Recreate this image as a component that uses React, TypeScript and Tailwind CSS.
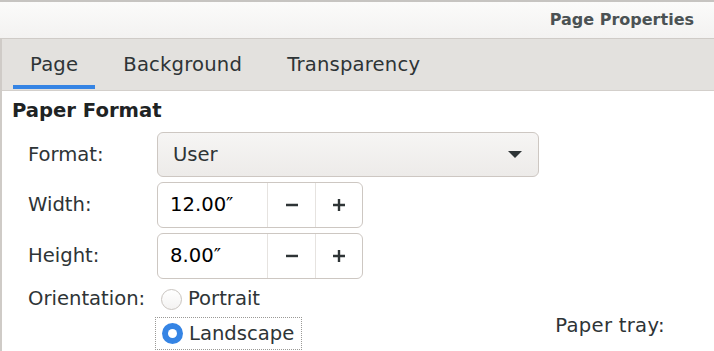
import React from 'react';

const font = { fontFamily: '"DejaVu Sans", "Liberation Sans", sans-serif' };

function SpinBox({ value }: { value: string }) {
  return (
    <div className="flex h-[46px] w-[206px] rounded-[6px] border border-[#cdc7c2] bg-white overflow-hidden">
      <div className="w-[109px] flex items-center pl-[12px] text-black">{value}</div>
      <button className="w-[48px] flex items-center justify-center border-l border-[#e6e3e0]">
        <svg width="14" height="14" viewBox="0 0 14 14">
          <path d="M1 7h12" stroke="#2e3436" strokeWidth="2.4" />
        </svg>
      </button>
      <button className="flex-1 flex items-center justify-center border-l border-[#e6e3e0]">
        <svg width="14" height="14" viewBox="0 0 14 14">
          <path d="M1 7h12M7 1v12" stroke="#2e3436" strokeWidth="2.4" />
        </svg>
      </button>
    </div>
  );
}

export default function App() {
  return (
    <div className="w-[714px] h-[351px] overflow-hidden bg-white text-[#2e3436]" style={font}>
      {/* Header */}
      <div className="h-[38px] border-t-2 border-[#c6c4c1] bg-gradient-to-b from-[#fbfbfa] to-[#f3f2f1] flex items-center justify-end pr-[20px]">
        <span className="text-[16px] font-bold text-[#4b5254]">Page Properties</span>
      </div>

      {/* Notebook */}
      <div className="border-l-2 border-t border-[#cfcbc7] h-full">
        {/* Tabs */}
        <div className="h-[52px] bg-[#e3e1de] border-b border-[#d3cfcb] flex items-stretch pl-[11px] gap-[11px] text-[19.6px] tracking-[0.2px]">
          <div className="relative flex items-center px-[17px] text-[#2e3436]">
            Page
            <div className="absolute left-0 right-0 bottom-[1px] h-[4px] bg-[#3584e4]" />
          </div>
          <div className="flex items-center px-[17px] text-[#2e3436]">Background</div>
          <div className="flex items-center px-[17px] text-[#2e3436]">Transparency</div>
        </div>

        {/* Content */}
        <div className="pl-[10px] pt-[8px] text-[19.6px]">
          <div className="h-[24px] flex items-center font-bold text-[#1e2324]">Paper Format</div>

          <div className="mt-[9px] pl-[16px] flex flex-col gap-[5px]">
            <div className="flex items-center">
              <div className="w-[129px]">Format:</div>
              <div className="w-[382px] h-[45px] rounded-[6px] border border-[#cdc7c2] bg-gradient-to-b from-[#f6f5f4] to-[#edebe9] flex items-center justify-between pl-[15px] pr-[15px]">
                <span>User</span>
                <svg width="16" height="8" viewBox="0 0 16 8">
                  <path d="M1 0h14L8 7z" fill="#2e3436" />
                </svg>
              </div>
            </div>
            <div className="flex items-center">
              <div className="w-[129px]">Width:</div>
              <SpinBox value="12.00″" />
            </div>
            <div className="flex items-center">
              <div className="w-[129px]">Height:</div>
              <SpinBox value="8.00″" />
            </div>

            <div className="flex items-center mt-[5px] h-[20px]">
              <div className="w-[133px]">Orientation:</div>
              <div className="flex items-center gap-[6px]">
                <span className="shrink-0 w-[21px] h-[21px] rounded-full border border-[#c9c4bf] bg-gradient-to-b from-white to-[#f4f3f2]" />
                <span>Portrait</span>
              </div>
            </div>

            <div className="flex items-center mt-[3px]">
              <div className="w-[127px] shrink-0" />
              <div className="h-[33px] flex items-center gap-[6px] pl-[6px] pr-[7px] border border-dotted border-[#9a9996]">
                <span className="shrink-0 w-[21px] h-[21px] rounded-full bg-[#3584e4] flex items-center justify-center">
                  <span className="w-[9px] h-[9px] rounded-full bg-white" />
                </span>
                <span>Landscape</span>
              </div>
              <div className="ml-[253px] -mt-[16px] tracking-[0.3px]">Paper tray:</div>
            </div>
          </div>
        </div>
      </div>
    </div>
  );
}
